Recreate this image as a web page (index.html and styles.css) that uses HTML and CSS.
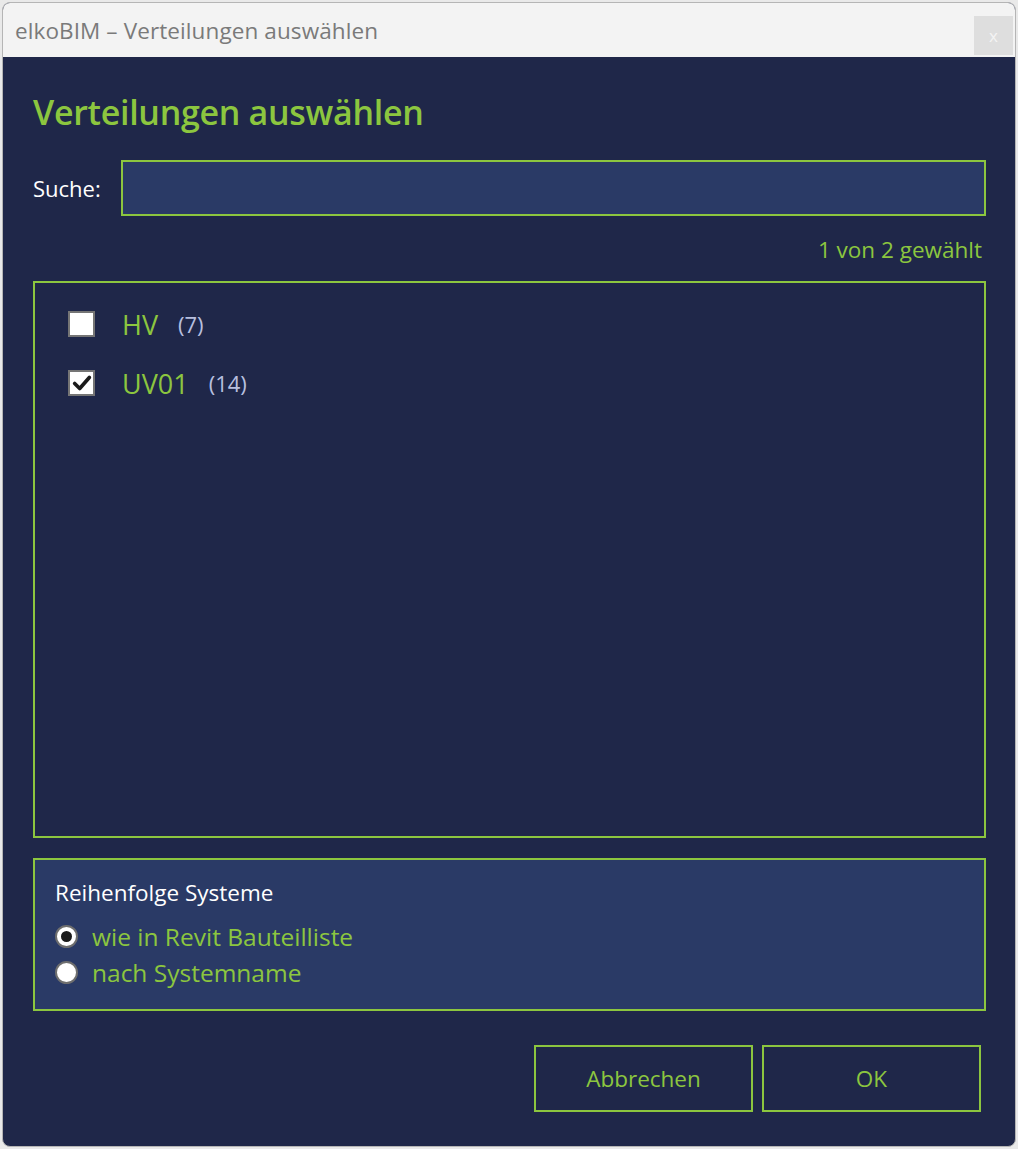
FILE: index.html
```html
<!DOCTYPE html>
<html lang="de">
<head>
    <meta charset="UTF-8">
    <title>elkoBIM – Verteilungen auswählen</title>
    <link rel="stylesheet" href="styles.css">
</head>
<body>

    <div class="window">
        <!-- Title bar -->
        <div class="titlebar">
            <span class="title">elkoBIM – Verteilungen auswählen</span>
            <div class="close-btn">x</div>
        </div>

        <div class="content">
            <h1 class="heading">Verteilungen auswählen</h1>

            <div class="search-row">
                <label class="search-label" for="search">Suche:</label>
                <input id="search" class="search-input" type="text">
            </div>

            <div class="count">1 von 2 gewählt</div>

            <!-- Distribution list -->
            <div class="list">
                <div class="item">
                    <span class="checkbox"></span>
                    <span class="item-name">HV</span>
                    <span class="item-count">(7)</span>
                </div>
                <div class="item">
                    <span class="checkbox checked">
                        <svg viewBox="0 0 24 24" width="22" height="22"><path d="M4 12.5 L9.5 18 L20 6" fill="none" stroke="#1a1a1a" stroke-width="4" stroke-linecap="round" stroke-linejoin="round"/></svg>
                    </span>
                    <span class="item-name">UV01</span>
                    <span class="item-count">(14)</span>
                </div>
            </div>

            <!-- Sort order -->
            <div class="group">
                <div class="group-title">Reihenfolge Systeme</div>
                <div class="radio-row">
                    <span class="radio checked"></span>
                    <span class="radio-label">wie in Revit Bauteilliste</span>
                </div>
                <div class="radio-row">
                    <span class="radio"></span>
                    <span class="radio-label">nach Systemname</span>
                </div>
            </div>

            <div class="buttons">
                <button class="btn">Abbrechen</button>
                <button class="btn">OK</button>
            </div>
        </div>
    </div>

</body>
</html>
```

FILE: styles.css
```css
body {
    margin: 0;
    background-color: #e9e9e9;
    font-family: "Open Sans", "Noto Sans", sans-serif;
}

.window {
    margin: 2px 2px 2px 2px;
    height: 1143px;
    border: 1px solid #b5b5b5;
    border-radius: 8px;
    overflow: hidden;
    background-color: #1f2749; /* dark navy */
    display: flex;
    flex-direction: column;
}

/* Title bar */
.titlebar {
    height: 54px;
    background-color: #f3f3f3;
    display: flex;
    align-items: center;
    justify-content: space-between;
    padding-left: 12px;
    padding-right: 2px;
}

.title {
    font-size: 22.5px;
    color: #7a7a7a;
    letter-spacing: 0.1px;
}

.close-btn {
    width: 39px;
    height: 39px;
    margin-top: 10px;
    background-color: #dedede;
    color: #f4f4f4;
    font-size: 17px;
    display: flex;
    align-items: center;
    justify-content: center;
}

.content {
    padding: 35px 29px 0 30px;
    display: flex;
    flex-direction: column;
}

.heading {
    margin: 0;
    height: 40px;
    line-height: 40px;
    font-size: 34px;
    font-weight: 600;
    color: #8cc63f;
    letter-spacing: -0.3px;
}

.search-row {
    margin-top: 28px;
    display: flex;
    align-items: center;
}

.search-label {
    width: 88px;
    font-size: 22px;
    color: #ffffff;
}

.search-input {
    flex: 1;
    height: 56px;
    box-sizing: border-box;
    border: 2px solid #8cc63f;
    background-color: #2a3a66;
    color: #ffffff;
    font-size: 20px;
    outline: none;
    margin: 0;
}

.count {
    margin-top: 21px;
    height: 26px;
    line-height: 26px;
    text-align: right;
    padding-right: 4px;
    font-size: 22.5px;
    color: #8cc63f;
}

/* Distribution list */
.list {
    margin-top: 18px;
    height: 557px;
    box-sizing: border-box;
    border: 2px solid #8cc63f;
    padding: 28px 0 0 33px;
    display: flex;
    flex-direction: column;
    gap: 33px;
}

.item {
    display: flex;
    align-items: center;
    height: 26px;
}

.checkbox {
    width: 27px;
    height: 26px;
    box-sizing: border-box;
    border: 2px solid #757575;
    background-color: #ffffff;
    display: flex;
    align-items: center;
    justify-content: center;
}

.item-name {
    margin-left: 27px;
    font-size: 27px;
    color: #8cc63f;
}

.item-count {
    margin-left: 20px;
    font-size: 22px;
    color: #b7bfdf;
}

/* Sort order */
.group {
    margin-top: 20px;
    height: 153px;
    box-sizing: border-box;
    border: 2px solid #8cc63f;
    background-color: #2a3a66;
    padding: 20px 0 0 20px;
}

.group-title {
    height: 26px;
    line-height: 26px;
    font-size: 22.5px;
    color: #ffffff;
}

.radio-row {
    display: flex;
    align-items: center;
    height: 36px;
}

.group-title + .radio-row {
    margin-top: 12px;
}

.radio {
    width: 23px;
    height: 23px;
    box-sizing: border-box;
    border: 2px solid #6e6e6e;
    border-radius: 50%;
    background-color: #ffffff;
    display: flex;
    align-items: center;
    justify-content: center;
}

.radio.checked::after {
    content: '';
    width: 11px;
    height: 11px;
    border-radius: 50%;
    background-color: #1a1a1a;
}

.radio-label {
    margin-left: 14px;
    font-size: 24.5px;
    color: #8cc63f;
}

.buttons {
    margin-top: 34px;
    padding-right: 5px;
    display: flex;
    justify-content: flex-end;
    gap: 9px;
}

.btn {
    width: 219px;
    height: 67px;
    border: 2px solid #8cc63f;
    background-color: transparent;
    color: #8cc63f;
    font-family: "Open Sans", "Noto Sans", sans-serif;
    font-size: 22.5px;
    cursor: pointer;
}
```
